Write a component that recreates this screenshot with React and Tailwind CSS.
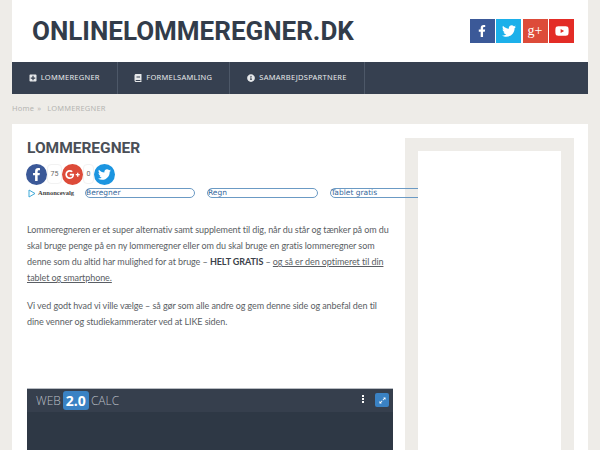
import React from "react";
import { FaFacebookF, FaTwitter, FaYoutube, FaPlusSquare, FaBook, FaInfoCircle, FaGooglePlusG, FaExpandAlt } from "react-icons/fa";

const navItems = [
  { label: "LOMMEREGNER", icon: FaPlusSquare, width: "w-[105.5px]" },
  { label: "FORMELSAMLING", icon: FaBook, width: "w-[112.5px]" },
  { label: "SAMARBEJDSPARTNERE", icon: FaInfoCircle, width: "w-[135px]" },
];

function SocialSquare({ bg, children }) {
  return (
    <a className={`w-[25px] h-[24px] flex items-center justify-center text-white ${bg}`}>
      {children}
    </a>
  );
}

function AdLink({ label, width }) {
  return (
    <a className={`${width} h-[10px] shrink-0 flex items-center rounded-full border border-[#6b9ac4] text-[#36689c] text-[7.5px] leading-none whitespace-nowrap font-['DejaVu_Sans',sans-serif]`}>
      {label}
    </a>
  );
}

function Count({ value, width }) {
  return (
    <span className={`${width} h-[20px] flex items-center justify-center border border-[#f2f2f2] rounded-sm text-[7px] text-[#666]`}>
      {value}
    </span>
  );
}

export default function App() {
  return (
    <div className="h-[450px] overflow-hidden bg-[#eeece8] px-3 font-['Roboto',sans-serif]">
      {/* header */}
      <div className="h-[62px] bg-white flex items-center justify-between pl-5 pr-[14px]">
        <h1 className="text-[26px] leading-none font-bold text-[#323c4a]">
          ONLINELOMMEREGNER.DK
        </h1>
        <div className="flex gap-[1.5px] -mt-px">
          <SocialSquare bg="bg-[#3b5998]"><FaFacebookF size={12} /></SocialSquare>
          <SocialSquare bg="bg-[#1cb0ea]"><FaTwitter size={14} /></SocialSquare>
          <SocialSquare bg="bg-[#dd4b39]"><span className="font-['Liberation_Serif',serif] text-[14px] leading-none">g+</span></SocialSquare>
          <SocialSquare bg="bg-[#e32c26]"><FaYoutube size={14} /></SocialSquare>
        </div>
      </div>

      {/* nav */}
      <nav className="h-[32px] bg-[#364050] flex">
        {navItems.map((item) => (
          <a key={item.label} className={`${item.width} border-r border-[#4d5868] flex items-center justify-center gap-[4px] text-[#e6e8ea] text-[7.5px] tracking-[0.25px] font-['Noto_Sans',sans-serif]`}>
            <item.icon size={8} />
            {item.label}
          </a>
        ))}
      </nav>

      {/* breadcrumb */}
      <div className="h-[30px] flex items-center text-[7.5px] text-[#b5b5b2] tracking-[0.2px] font-['Noto_Sans',sans-serif]">
        <span>Home</span>
        <span className="ml-[3px] mr-[6px]">»</span>
        <span>LOMMEREGNER</span>
      </div>

      {/* content */}
      <div className="bg-white h-[326px] flex pl-[15px] pt-[14px]">
        <div className="relative z-10 w-[366px] shrink-0">
          <h2 className="text-[15.5px] leading-[20px] font-bold text-[#4a4f57]">LOMMEREGNER</h2>
          <div className="flex items-center h-[22px] mt-[5px] -ml-px text-[#666]">
            <span className="w-[21px] h-[21px] rounded-full bg-[#3b5998] flex items-center justify-center text-white"><FaFacebookF size={13} /></span>
            <Count value="75" width="w-[15px]" />
            <span className="w-[21px] h-[21px] rounded-full bg-[#dd4b39] flex items-center justify-center text-white"><FaGooglePlusG size={15} /></span>
            <Count value="0" width="w-[11px]" />
            <span className="w-[21px] h-[21px] rounded-full bg-[#1b95e0] flex items-center justify-center text-white"><FaTwitter size={13} /></span>
          </div>
          <div className="flex items-center gap-3 h-[12px] mt-[2px]">
            <div className="w-[46px] shrink-0 flex items-center gap-[2px] pl-px">
              <svg width="8" height="9" viewBox="0 0 8 9" className="shrink-0">
                <path d="M1 1 L7 4.5 L1 8 Z" fill="none" stroke="#3fa9d8" strokeWidth="1" />
              </svg>
              <span className="text-[6.5px] whitespace-nowrap font-['Liberation_Serif',serif] font-bold text-[#444]">Annoncevalg</span>
            </div>
            <AdLink label="Beregner" width="w-[110px]" />
            <AdLink label="Regn" width="w-[111px]" />
            <AdLink label="Tablet gratis" width="w-[111px]" />
          </div>

          <div className="mt-[23px] text-[9px] tracking-[-0.08px] leading-[16px] text-[#5a5e64] whitespace-nowrap font-['Lato',sans-serif]">
            <p>
              Lommeregneren er et super alternativ samt supplement til dig, når du står og tænker på om du<br />
              skal bruge penge på en ny lommeregner eller om du skal bruge en gratis lommeregner som<br />
              denne som du altid har mulighed for at bruge – <strong className="text-[#3c424a]">HELT GRATIS</strong> – <span className="underline">og så er den optimeret til din<br />
              tablet og smartphone.</span>
            </p>
            <p className="mt-[12px]">
              Vi ved godt hvad vi ville vælge – så gør som alle andre og gem denne side og anbefal den til<br />
              dine venner og studiekammerater ved at LIKE siden.
            </p>
          </div>

          {/* calculator */}
          <div className="mt-[58px] h-[80px] bg-[#2e3845] border-t border-[#b8bcc2]">
            <div className="h-[23px] bg-[#363f4d] flex items-center justify-between pl-[9px] pr-[4px] text-[#b9bec5]">
              <div className="flex items-center text-[12px] leading-none font-['Open_Sans',sans-serif] font-light">
                <span>WEB</span>
                <span className="mx-[2px] px-[3px] h-[19px] flex items-center bg-[#3a82c4] rounded-[3px] text-white font-bold text-[14px]">2.0</span>
                <span>CALC</span>
              </div>
              <div className="flex items-center gap-[11px] -mt-px">
                <span className="flex flex-col gap-px -mt-[3px]">
                  <i className="w-[2px] h-[2px] bg-white" />
                  <i className="w-[2px] h-[2px] bg-white" />
                  <i className="w-[2px] h-[2px] bg-white" />
                </span>
                <span className="w-[14px] h-[14px] rounded-[2px] bg-[#3a82c4] flex items-center justify-center text-white"><FaExpandAlt size={7} /></span>
              </div>
            </div>
          </div>
        </div>

        {/* sidebar */}
        <aside className="ml-3 w-[169px] h-[320px] bg-[#eeece8] px-[13px] pt-[13px]">
          <div className="relative z-20 bg-white h-full" />
        </aside>
      </div>
    </div>
  );
}
